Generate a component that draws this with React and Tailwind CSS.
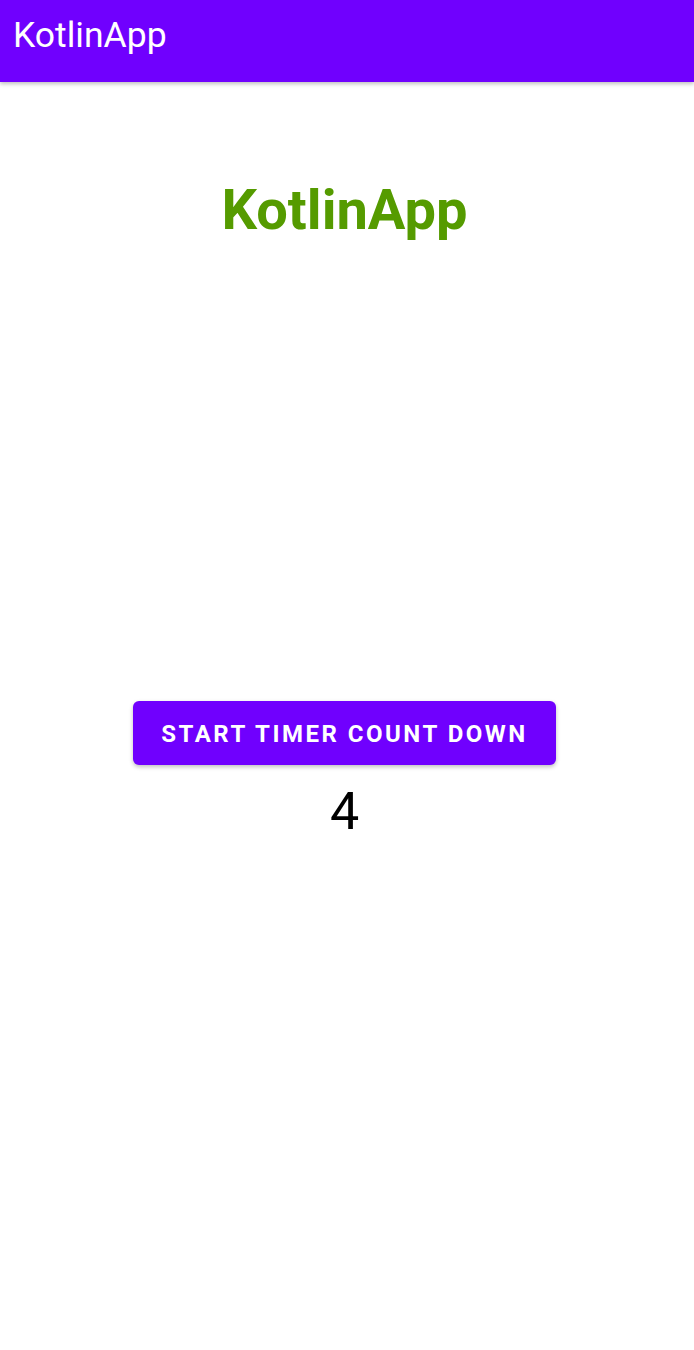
export default function App() {
  return (
    <div className="min-h-[1350px] bg-white flex flex-col" style={{ fontFamily: "Roboto, 'Noto Sans', sans-serif" }}>
      <div className="h-[82px] bg-[#7000fe] shadow-[0_2px_4px_rgba(0,0,0,0.25)] flex items-start pt-[18px] px-[13px] relative z-10">
        <span className="text-white text-[35.5px] leading-none font-normal">KotlinApp</span>
      </div>
      <div className="flex flex-col items-center">
        <div className="mt-[100px] text-[56px] leading-none font-bold text-[#559b00] -ml-[5px]">KotlinApp</div>
        <button className="mt-[463px] w-[423px] h-[64px] -ml-[5px] rounded-[6px] bg-[#7000fe] text-white text-[24px] font-bold tracking-[2.5px] pt-[2px] shadow-[0_2px_4px_rgba(0,0,0,0.25)] flex items-center justify-center">
          START TIMER COUNT DOWN
        </button>
        <div className="mt-[21px] text-[52px] leading-none font-normal text-black -ml-[5px]">4</div>
      </div>
    </div>
  );
}
